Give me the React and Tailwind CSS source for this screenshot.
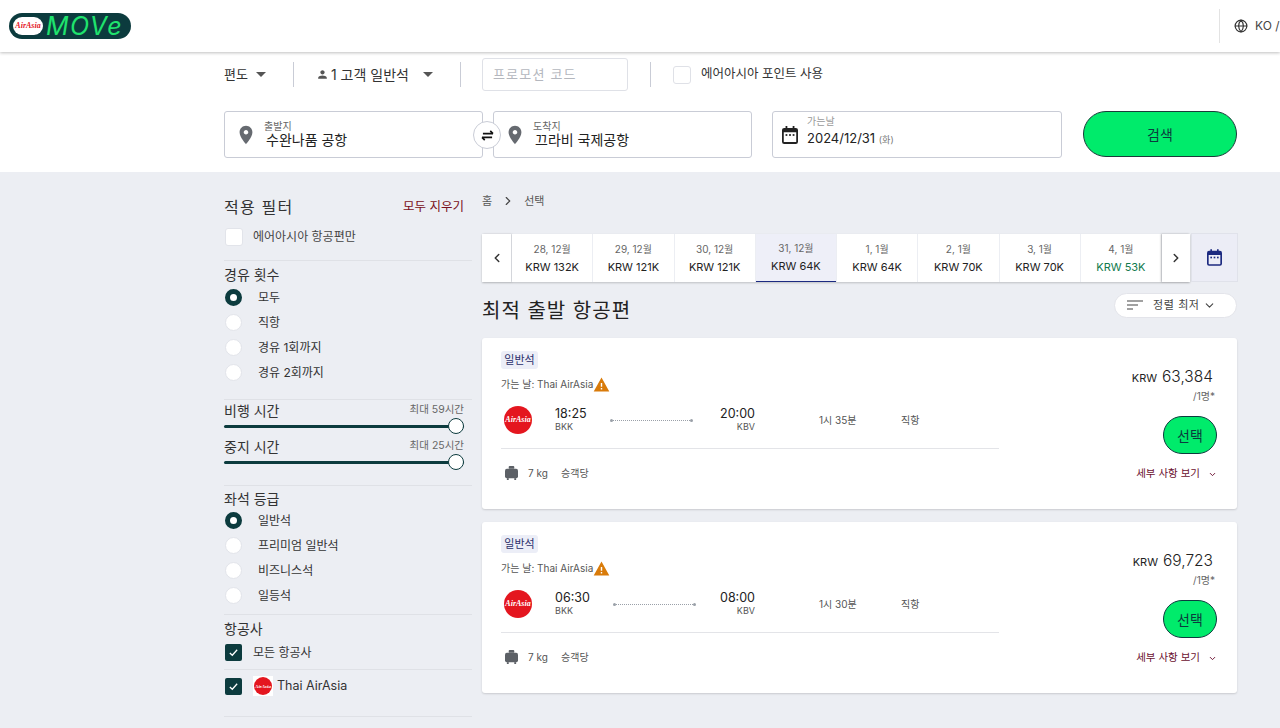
import React from 'react';
import { Globe, ChevronDown, ChevronLeft, ChevronRight } from 'lucide-react';

const font = { fontFamily: '"Inter", "Noto Sans CJK KR", sans-serif' };

const dates = [
    { day: '28, 12월', price: 'KRW 132K' },
    { day: '29, 12월', price: 'KRW 121K' },
    { day: '30, 12월', price: 'KRW 121K' },
    { day: '31, 12월', price: 'KRW 64K', active: true },
    { day: '1, 1월', price: 'KRW 64K' },
    { day: '2, 1월', price: 'KRW 70K' },
    { day: '3, 1월', price: 'KRW 70K' },
    { day: '4, 1월', price: 'KRW 53K', cheapest: true },
];

const flights = [
    { price: '63,384', depart: '18:25', arrive: '20:00', duration: '1시 35분', lineGap: 'ml-[23px]', arriveGap: 'ml-[23px]' },
    { price: '69,723', depart: '06:30', arrive: '08:00', duration: '1시 30분', lineGap: 'ml-[26px]', arriveGap: 'ml-[20px]' },
];

const Pin = () => (
    <svg viewBox="0 0 24 24" className="w-[22px] h-[22px] fill-[#666a70] shrink-0">
        <path d="M12 2C8.13 2 5 5.13 5 9c0 5.25 7 13 7 13s7-7.75 7-13c0-3.87-3.13-7-7-7zm0 9.5c-1.38 0-2.5-1.12-2.5-2.5s1.12-2.5 2.5-2.5 2.5 1.12 2.5 2.5-1.12 2.5-2.5 2.5z" />
    </svg>
);

const CalendarIcon = ({ className }) => (
    <svg viewBox="0 0 18 20" className={className}>
        <path fillRule="evenodd" d="M4 0h2v2h6V0h2v2h1.5A2.5 2.5 0 0 1 18 4.500v13a2.500 2.500 0 0 1-2.500 2.500h-13A2.500 2.500 0 0 1 0 17.500v-13A2.500 2.500 0 0 1 2.500 2H4V0zM2 7v10.500a.5.5 0 0 0 .5.5h13a.5.5 0 0 0 .5-.5V7H2z" />
        <rect x="4" y="9" width="2" height="2" />
        <rect x="8" y="9" width="2" height="2" />
        <rect x="12" y="9" width="2" height="2" />
    </svg>
);

const Caret = ({ className = '' }) => (
    <span className={`w-0 h-0 border-x-[5px] border-x-transparent border-t-[5px] border-t-[#555] ${className}`} />
);

const AirAsiaBadge = ({ className, text }) => (
    <div className={`rounded-full bg-[#e4161f] flex items-center justify-center shrink-0 ${className}`}>
        <span className={`text-white italic font-bold leading-none whitespace-nowrap ${text}`} style={{ fontFamily: '"Liberation Serif", serif' }}>AirAsia</span>
    </div>
);

const Radio = ({ checked, label }) => (
    <div className="flex items-center h-[25px] ml-px">
        <span className={`w-[17px] h-[17px] rounded-full ${checked ? 'border-[5px] border-[#0c3b3e] bg-white' : 'border border-[#e2e4ea] bg-white'}`} />
        <span className="ml-4 text-[12px] text-[#333]">{label}</span>
    </div>
);

const Checked = () => (
    <span className="w-[17px] h-[17px] rounded-[2px] bg-[#0c3b3e] flex items-center justify-center shrink-0">
        <svg viewBox="0 0 12 12" className="w-[11px] h-[11px] fill-none stroke-white stroke-[1.4]"><path d="M2 6.500l2.700 2.500L10 3" /></svg>
    </span>
);

const Slider = () => (
    <div className="relative h-[3px] mr-2 rounded-full bg-[#0c3b3e]">
        <span className="absolute right-0 top-[-7px] w-4 h-4 rounded-full bg-white border border-[#0c3b3e]" />
    </div>
);

const Field = ({ label, value }) => (
    <div className="flex-1 h-[47px] bg-white border border-[#c9ccd6] rounded-[3px] flex items-center pl-[10px]">
        <Pin />
        <div className="ml-[7px] -mt-[2px]">
            <div className="text-[10px] leading-[11px] text-[#666]">{label}</div>
            <div className="text-[14px] leading-[15px] text-[#222] ml-[2px]">{value}</div>
        </div>
    </div>
);

const FlightCard = ({ flight }) => (
    <div className="h-[171px] bg-white rounded-[3px] shadow-[0_1px_2px_rgba(0,0,0,0.15)] flex">
        <div className="w-[517px] pl-[19px] pt-[13px]">
            <div className="w-[37px] h-[18px] rounded-[3px] bg-[#eceef7] text-[11px] leading-[18px] text-center text-[#2a2f6a]">일반석</div>
            <div className="flex items-center mt-[6px] h-[18px] text-[10px] text-[#555]">
                가는 날: Thai AirAsia
                <svg viewBox="0 0 24 24" className="w-[17px] h-[17px] fill-[#d97b0a]"><path d="M1 22h22L12 2 1 22zm12-3h-2v-2h2v2zm0-4h-2v-5h2v5z" /></svg>
            </div>
            <div className="flex items-center mt-[8px] h-[38px]">
                <AirAsiaBadge className="w-7 h-7 ml-[3px]" text="text-[8px]" />
                <div className="ml-[23px] w-[32px] -mt-[3px] whitespace-nowrap">
                    <div className="text-[12.500px] leading-[16px] text-[#222]">{flight.depart}</div>
                    <div className="text-[9px] leading-[9px] text-[#555]">BKK</div>
                </div>
                <div className={`${flight.lineGap} w-[83px] flex items-center`}>
                    <span className="w-[3px] h-[3px] rounded-full bg-[#9aa0a8]" />
                    <span className="flex-1 border-t border-dotted border-[#9aa0a8]" />
                    <span className="w-[3px] h-[3px] rounded-full bg-[#9aa0a8]" />
                </div>
                <div className={`${flight.arriveGap} w-[39px] -mt-[3px] text-right`}>
                    <div className="text-[12.500px] leading-[16px] text-[#222]">{flight.arrive}</div>
                    <div className="text-[9px] leading-[9px] text-[#555]">KBV</div>
                </div>
                <div className="ml-[64px] w-[82px] text-[10px] text-[#555] whitespace-nowrap">{flight.duration}</div>
                <div className="text-[10px] text-[#555]">직항</div>
            </div>
            <div className="mt-[9px] border-t border-[#e3e4e8]" />
            <div className="flex items-center mt-[14px] h-[20px] text-[10px] text-[#555]">
                <svg viewBox="0 0 14 16" className="w-[13px] h-[15px] ml-[4px] fill-[#5c6066]">
                    <rect x="4" y="0" width="6" height="3" rx="1" />
                    <rect x="0" y="3" width="14" height="10" rx="2" />
                    <rect x="2" y="13" width="2" height="2" />
                    <rect x="10" y="13" width="2" height="2" />
                </svg>
                <span className="ml-[10px] w-[33px]">7 kg</span>
                <span>승객당</span>
            </div>
        </div>
        <div className="flex-1 flex flex-col items-end pr-[20px] pt-[27px]">
            <div className="mr-[4px] flex items-baseline text-[#222] h-[24px]">
                <span className="text-[11px] mr-[5px]">KRW</span>
                <span className="text-[15.500px] font-light">{flight.price}</span>
            </div>
            <div className="text-[10px] leading-[14px] text-[#666] mr-[2px]">/1명*</div>
            <button className="mt-[13px] w-[54px] h-[38px] rounded-full bg-[#00eb6b] border border-[#0c3b3e] text-[14px] text-[#0c3b3e]">선택</button>
            <div className="flex items-center mt-[12px] h-[16px] text-[10.500px] text-[#6b1030]">
                세부 사항 보기
                <ChevronDown className="w-[9px] h-[9px] ml-[8px]" strokeWidth={2.5} />
            </div>
        </div>
    </div>
);

const App = () => (
    <div className="w-[1280px] h-[728px] overflow-hidden bg-[#eceef3]" style={font}>
        {/* top bar */}
        <header className="relative z-10 h-[52px] bg-white shadow-[0_1px_3px_rgba(0,0,0,0.25)] flex items-center pl-[9px]">
            <div className="w-[122px] h-[26px] rounded-full bg-[#0c3b3e] flex items-center pl-[4px] shrink-0">
                <div className="w-[30px] h-[18px] rounded-full bg-white flex items-center justify-center shrink-0">
                    <span className="text-[8px] italic font-bold text-[#e4161f] leading-none" style={{ fontFamily: '"Liberation Serif", serif' }}>AirAsia</span>
                </div>
                <span className="ml-[3px] text-[25px] leading-[26px] italic tracking-[1.5px] text-[#1fe36d]">MOVe</span>
            </div>
            <div className="ml-[1088px] h-[34px] border-l border-[#e3e3e3] flex items-center pl-[14px] shrink-0 whitespace-nowrap">
                <Globe className="w-[14px] h-[14px] text-[#333]" />
                <span className="ml-[7px] text-[12px] text-[#444]">KO /</span>
            </div>
        </header>

        {/* search panel */}
        <section className="h-[120px] bg-white pl-[224px] pr-[43px]">
            <div className="h-[45px] mb-[14px] flex items-center text-[12px] text-[#333]">
                <span className="text-[13px]">편도</span>
                <Caret className="ml-[8px]" />
                <span className="ml-[27px] h-[25px] border-l border-[#c9ccd6]" />
                <svg viewBox="0 0 24 24" className="ml-[22px] w-[13px] h-[13px] fill-[#555]"><path d="M12 12c2.210 0 4-1.790 4-4s-1.790-4-4-4-4 1.790-4 4 1.790 4 4 4zm0 2c-2.670 0-8 1.340-8 4v2h16v-2c0-2.660-5.330-4-8-4z" /></svg>
                <span className="ml-[2px] text-[14px] w-[92px] whitespace-nowrap">1 고객 일반석</span>
                <Caret />
                <span className="ml-[27px] h-[25px] border-l border-[#c9ccd6]" />
                <div className="ml-[21px] w-[146px] h-[33px] border border-[#dfe1e7] rounded-[3px] pl-[10px] text-[13px] leading-[30px] tracking-[1.2px] text-[#b4b7be]">프로모션 코드</div>
                <span className="ml-[22px] h-[25px] border-l border-[#c9ccd6]" />
                <span className="ml-[22px] w-[18px] h-[18px] border border-[#dfe1e7] rounded-[3px]" />
                <span className="ml-[10px] text-[12.500px]">에어아시아 포인트 사용</span>
            </div>
            <div className="flex items-start">
                <div className="relative w-[528px] flex gap-[10px]">
                    <Field label="출발지" value="수완나품 공항" />
                    <Field label="도착지" value="끄라비 국제공항" />
                    <div className="absolute left-[249px] top-[10px] w-[28px] h-[28px] rounded-full bg-white border border-[#c9ccd6] flex items-center justify-center">
                        <svg viewBox="0 0 16 12" className="w-[15px] h-[11px] fill-none stroke-[#111] stroke-[1.8]">
                            <path d="M3 4h11M11 1l3 3" />
                            <path d="M13 8H2M5 11L2 8" />
                        </svg>
                    </div>
                </div>
                <div className="ml-[20px] w-[290px] h-[47px] bg-white border border-[#c9ccd6] rounded-[3px] flex items-center pl-[9px]">
                    <CalendarIcon className="w-[16px] h-[18px] fill-[#222] shrink-0" />
                    <div className="ml-[9px] -mt-[3px]">
                        <div className="text-[10px] leading-[11px] text-[#999]">가는날</div>
                        <div className="text-[13px] leading-[22px] text-[#222]">2024/12/31 <span className="text-[9px] text-[#777]">(화)</span></div>
                    </div>
                </div>
                <button className="ml-[21px] w-[154px] h-[46px] rounded-full bg-[#00eb6b] border border-[#1b3a3a] text-[14px] text-[#0c3b3e]">검색</button>
            </div>
        </section>

        <div className="flex pl-[224px] pr-[42px]">
            {/* filters */}
            <aside className="w-[248px] shrink-0">
                <div className="flex items-center justify-between pt-[14px] pr-[8px] h-[55px]">
                    <span className="text-[16px] tracking-[1.2px] text-[#333]">적용 필터</span>
                    <span className="text-[12.500px] mt-[2px] text-[#7a1020]">모두 지우기</span>
                </div>
                <div className="flex items-center h-[18px] mt-px">
                    <span className="ml-px w-[18px] h-[18px] bg-white border border-[#e2e4ea] rounded-[3px]" />
                    <span className="ml-[10px] text-[12px] text-[#444]">에어아시아 항공편만</span>
                </div>
                <div className="mt-[14px] border-t border-[#dfe1e6]" />
                <div className="mt-[5px] text-[14px] leading-[18px] text-[#333]">경유 횟수</div>
                <div className="mt-[1px]">
                    <Radio checked label="모두" />
                    <Radio label="직항" />
                    <Radio label="경유 1회까지" />
                    <Radio label="경유 2회까지" />
                </div>
                <div className="mt-[14px] border-t border-[#dfe1e6]" />
                <div className="flex justify-between items-center h-[20px] pr-[8px]">
                    <span className="text-[14px] text-[#333]">비행 시간</span>
                    <span className="text-[10.500px] text-[#666]">최대 59시간</span>
                </div>
                <div className="mt-[5px]"><Slider /></div>
                <div className="flex justify-between items-center mt-[8px] h-[20px] pr-[8px]">
                    <span className="text-[14px] text-[#333]">중지 시간</span>
                    <span className="text-[10.500px] text-[#666]">최대 25시간</span>
                </div>
                <div className="mt-[5px]"><Slider /></div>
                <div className="mt-[21px] border-t border-[#dfe1e6]" />
                <div className="mt-[4px] text-[14px] leading-[18px] text-[#333]">좌석 등급</div>
                <div>
                    <Radio checked label="일반석" />
                    <Radio label="프리미엄 일반석" />
                    <Radio label="비즈니스석" />
                    <Radio label="일등석" />
                </div>
                <div className="mt-[6px] border-t border-[#dfe1e6]" />
                <div className="mt-[5px] text-[14px] leading-[18px] text-[#333]">항공사</div>
                <div className="flex items-center h-[17px] mt-[6px] ml-px">
                    <Checked />
                    <span className="ml-[11px] text-[12px] text-[#333]">모든 항공사</span>
                </div>
                <div className="mt-[8px] border-t border-[#dfe1e6]" />
                <div className="flex items-center h-[20px] mt-[6px] ml-px">
                    <Checked />
                    <span className="ml-[11px] w-[20px] h-[20px] bg-white flex items-center justify-center">
                        <AirAsiaBadge className="w-[18px] h-[18px]" text="text-[5px]" />
                    </span>
                    <span className="ml-[4px] text-[12.500px] text-[#333]">Thai AirAsia</span>
                </div>
                <div className="mt-[20px] border-t border-[#dfe1e6]" />
            </aside>

            {/* results */}
            <main className="flex-1 ml-[10px]">
                <div className="flex items-center h-[20px] mt-[19px] text-[11px] text-[#555]">
                    <span>홈</span>
                    <ChevronRight className="w-[14px] h-[14px] mx-[9px] text-[#444]" />
                    <span>선택</span>
                </div>
                <div className="flex mt-[22px] h-[49px] items-stretch">
                    <div className="flex h-[48px] self-center shadow-[0_1px_2px_rgba(0,0,0,0.2)]">
                        <div className="w-[29px] bg-white flex items-center justify-center shadow-[1px_0_2px_rgba(0,0,0,0.15)] mr-px">
                            <ChevronLeft className="w-[14px] h-[14px] text-[#333]" strokeWidth={2.5} />
                        </div>
                        {dates.map(d => (
                            <div key={d.day} className={`w-[80.250px] mr-px pt-[2px] flex flex-col items-center justify-center ${d.active ? 'bg-[#eeeff8] border-b border-[#1c2a80]' : 'bg-white'}`}>
                                <div className="text-[10px] leading-[16px] text-[#666]">{d.day}</div>
                                <div className={`text-[11px] leading-[20px] ${d.cheapest ? 'text-[#117a4d]' : 'text-[#222]'}`}>{d.price}</div>
                            </div>
                        ))}
                        <div className="w-[28px] bg-white flex items-center justify-center shadow-[-1px_0_2px_rgba(0,0,0,0.25)]">
                            <ChevronRight className="w-[14px] h-[14px] text-[#333]" strokeWidth={2.5} />
                        </div>
                    </div>
                    <div className="ml-px w-[47px] bg-[#ecedf6] border border-[#e0e2ea] flex items-center justify-center">
                        <CalendarIcon className="w-[15px] h-[17px] fill-[#1c2a80]" />
                    </div>
                </div>
                <div className="flex items-center justify-between mt-[10px] mr-px h-[26px]">
                    <h1 className="text-[20px] mt-[11px] tracking-[1px] text-[#222]">최적 출발 항공편</h1>
                    <div className="w-[123px] h-[25px] rounded-full bg-white border border-[#e3e4ea] flex items-center pl-[12px] text-[11px] text-[#444]">
                        <svg viewBox="0 0 16 10" className="w-[16px] h-[10px] stroke-[#444] stroke-[1.2] fill-none"><path d="M0 1h16M0 5h11M0 9h6" /></svg>
                        <span className="ml-[10px] tracking-[0.6px] whitespace-nowrap">정렬 최저</span>
                        <ChevronDown className="w-[13px] h-[13px] ml-[3px]" />
                    </div>
                </div>
                <div className="flex flex-col gap-[13px] mt-[20px] mr-px">
                    {flights.map(f => <FlightCard key={f.depart} flight={f} />)}
                </div>
            </main>
        </div>
    </div>
);

export default App;
